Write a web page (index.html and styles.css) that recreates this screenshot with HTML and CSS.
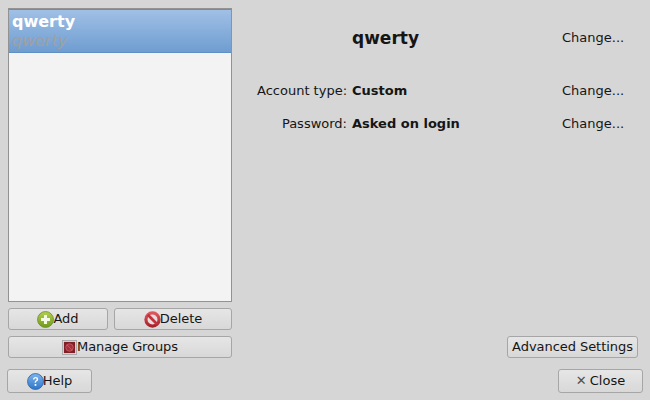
FILE: index.html
```html
<!DOCTYPE html>
<html lang="en">
<head>
<meta charset="utf-8">
<title>Users</title>
<link rel="stylesheet" href="styles.css">
</head>
<body>
<div class="dialog">
  <div class="main">
    <div class="left">
      <div class="list">
        <div class="row-selected">
          <div class="row-name">qwerty</div>
          <div class="row-sub">qwerty</div>
        </div>
      </div>
      <div class="btn-row">
        <button class="btn btn-add">
          <svg class="ico" viewBox="0 0 16 16" width="17" height="17"><defs><linearGradient id="g" x1="0" y1="0" x2="0" y2="1"><stop offset="0" stop-color="#b4cf52"/><stop offset="1" stop-color="#6f9a1c"/></linearGradient></defs><circle cx="8" cy="8" r="7.5" fill="url(#g)" stroke="#6b9420" stroke-width="0.8"/><path d="M6.6 3.8h2.8v2.8h2.8v2.8H9.4v2.8H6.6V9.4H3.8V6.6h2.8z" fill="#f4f8e6"/></svg>Add
        </button>
        <button class="btn btn-delete">
          <svg class="ico" viewBox="0 0 16 16" width="17" height="17"><defs><linearGradient id="r" x1="0" y1="0" x2="0" y2="1"><stop offset="0" stop-color="#e0565c"/><stop offset="1" stop-color="#a8222e"/></linearGradient></defs><circle cx="8" cy="8" r="6.2" fill="#e9dcdc" stroke="url(#r)" stroke-width="3"/><path d="M3.6 3.6l8.8 8.8" stroke="#c1333b" stroke-width="2.6"/></svg>Delete
        </button>
      </div>
      <button class="btn btn-manage">
        <svg class="ico ico-manage" viewBox="0 0 16 16" width="15" height="15"><rect x="0.5" y="0.5" width="15" height="15" fill="#e4e4e4" stroke="#a8a8a8"/><rect x="2" y="2" width="12" height="12" fill="#7e2029"/><circle cx="8" cy="8" r="4" fill="#a3323b" stroke="#c9555c" stroke-width="1"/><path d="M5.3 5.3l5.4 5.4" stroke="#c9555c" stroke-width="1"/></svg>Manage Groups
      </button>
    </div>
    <div class="right">
      <div class="info">
        <div class="info-row info-title">
          <span class="label"></span>
          <span class="value title">qwerty</span>
          <span class="change">Change...</span>
        </div>
        <div class="info-row info-type">
          <span class="label">Account type:</span>
          <span class="value">Custom</span>
          <span class="change">Change...</span>
        </div>
        <div class="info-row info-pass">
          <span class="label">Password:</span>
          <span class="value">Asked on login</span>
          <span class="change">Change...</span>
        </div>
      </div>
      <div class="adv-row">
        <button class="btn btn-adv">Advanced Settings</button>
      </div>
    </div>
  </div>
  <div class="footer">
    <button class="btn btn-foot">
      <svg class="ico" viewBox="0 0 16 16" width="17" height="17"><defs><linearGradient id="h" x1="0" y1="0" x2="0" y2="1"><stop offset="0" stop-color="#7db4ec"/><stop offset="1" stop-color="#2f76c8"/></linearGradient></defs><circle cx="8" cy="8" r="7.5" fill="url(#h)" stroke="#2a66ae" stroke-width="0.8"/><path d="M5.6 6.1c.1-1.5 1.1-2.3 2.5-2.3s2.4.8 2.4 2c0 1-.6 1.5-1.3 2-.6.4-.8.7-.8 1.4H7.2c0-1.1.3-1.6 1-2.1.5-.4.9-.7.9-1.2 0-.5-.4-.9-1-.9-.7 0-1.1.4-1.1 1.1z" fill="#fff"/><rect x="7.2" y="10.4" width="1.6" height="1.7" fill="#fff"/></svg>Help
    </button>
    <button class="btn btn-foot btn-close"><span class="x">✕</span>Close</button>
  </div>
</div>
</body>
</html>
```
FILE: styles.css
```css
html, body {
  margin: 0;
  padding: 0;
  width: 650px;
  height: 400px;
  overflow: hidden;
  background: #d6d6d6;
  font-family: "DejaVu Sans", sans-serif;
  font-size: 13px;
  color: #151515;
}
.dialog {
  display: flex;
  flex-direction: column;
  height: 400px;
  box-sizing: border-box;
  padding: 8px 7px 7px;
}
.main {
  display: flex;
  flex: 1;
  min-height: 0;
}
.left {
  width: 224px;
  margin-left: 1px;
  display: flex;
  flex-direction: column;
  gap: 6px;
}
.list {
  height: 294px;
  box-sizing: border-box;
  border: 1px solid #929292;
  background: #f3f3f3;
}
.row-selected {
  height: 44px;
  box-sizing: border-box;
  border-top: 1px solid #5f8fc4;
  border-bottom: 1px solid #5f8fc4;
  background: linear-gradient(#a0c0e6, #6f9dd0);
  padding: 2px 0 0 3px;
}
.row-name {
  font-weight: bold;
  font-size: 16px;
  line-height: 19px;
  color: #fff;
}
.row-sub {
  font-style: italic;
  font-size: 16px;
  line-height: 19px;
  color: #a0a0a0;
}
.btn {
  display: flex;
  align-items: center;
  justify-content: center;
  box-sizing: border-box;
  height: 22px;
  padding: 0 0 1px;
  border: 1px solid #a6a6a6;
  border-radius: 3px;
  background: linear-gradient(#e6e6e6, #d8d8d8);
  font-family: inherit;
  font-size: 13px;
  color: #151515;
}
.btn-row {
  display: flex;
  gap: 6px;
}
.btn-add { width: 100px; }
.btn-delete { width: 118px; }
.btn-manage {
  width: 224px;
  letter-spacing: -0.1px;
}
.ico {
  flex: none;
  margin: 1px -1px 0 0;
}
.ico-manage { margin-right: 0; }
.right {
  flex: 1;
  display: flex;
  flex-direction: column;
  justify-content: space-between;
  padding-left: 25px;
  padding-right: 5px;
}
.info {
  display: flex;
  flex-direction: column;
}
.info-row {
  display: grid;
  grid-template-columns: 90px 205px auto;
  column-gap: 5px;
  align-items: center;
  line-height: 16px;
}
.info-title { margin-top: 22px; }
.info-type { margin-top: 37px; }
.info-pass { margin-top: 17px; }
.label {
  text-align: right;
  white-space: nowrap;
}
.value { font-weight: bold; }
.title { font-size: 17px; line-height: 16px; }
.adv-row {
  display: flex;
  justify-content: flex-end;
}
.btn-adv {
  width: 131px;
  letter-spacing: -0.05px;
}
.footer {
  display: flex;
  justify-content: space-between;
  margin-top: 11px;
}
.btn-foot {
  width: 85px;
  height: 24px;
}
.x {
  font-size: 13px;
  margin-right: 3px;
  color: #505050;
}
```
